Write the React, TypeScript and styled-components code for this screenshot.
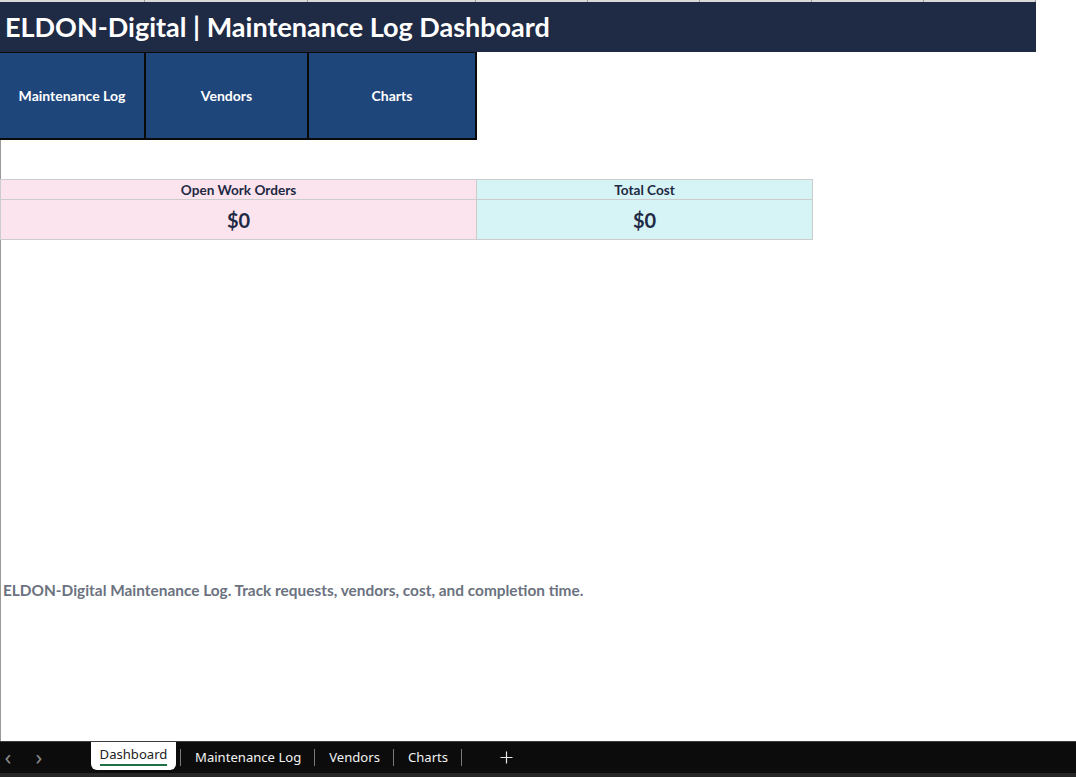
import styled, { createGlobalStyle } from "styled-components";

const GlobalStyle = createGlobalStyle`
  html, body {
    margin: 0;
    padding: 0;
    background: #ffffff;
  }
  #root {
    height: 777px;
  }
`;

const sheetFont = `Lato, "Open Sans", "Liberation Sans", sans-serif`;
const uiFont = `"Noto Sans", "Open Sans", "Liberation Sans", sans-serif`;

const columnWidths = [145, 163, 168, 112, 112, 112, 112, 112];
const navItems = [
  { label: "Maintenance Log", width: 146 },
  { label: "Vendors", width: 163 },
  { label: "Charts", width: 168 },
];
const sheetTabs = ["Maintenance Log", "Vendors", "Charts"];

export default function App() {
  return (
    <Page>
      <GlobalStyle />
      <Sheet>
        <ColumnRule>
          {columnWidths.map((w, i) => (
            <ColumnTick key={i} style={{ width: w }} />
          ))}
        </ColumnRule>
        <TitleBar>ELDON-Digital | Maintenance Log Dashboard</TitleBar>
        <NavRow>
          {navItems.map((item) => (
            <NavButton key={item.label} $width={item.width}>
              {item.label}
            </NavButton>
          ))}
        </NavRow>
        <Body>
          <KpiGrid>
            <KpiLabel $tone="#fce4ee">Open Work Orders</KpiLabel>
            <KpiLabel $tone="#d6f3f5">Total Cost</KpiLabel>
            <KpiValue $tone="#fce4ee">$0</KpiValue>
            <KpiValue $tone="#d6f3f5">$0</KpiValue>
          </KpiGrid>
          <Note>ELDON-Digital Maintenance Log. Track requests, vendors, cost, and completion time.</Note>
        </Body>
      </Sheet>
      <TabBar>
        <Arrows>
          <Arrow>‹</Arrow>
          <Arrow>›</Arrow>
        </Arrows>
        <ActiveTab>
          <ActiveLabel>Dashboard</ActiveLabel>
        </ActiveTab>
        <TabDivider />
        {sheetTabs.map((t) => (
          <SheetTab key={t}>
            <span>{t}</span>
            <TabDivider />
          </SheetTab>
        ))}
        <AddTab>
          <svg width="13" height="13" viewBox="0 0 13 13">
            <path d="M6.5 0.5v12M0.5 6.5h12" stroke="#e6e6e6" strokeWidth="1.2" fill="none" />
          </svg>
        </AddTab>
      </TabBar>
    </Page>
  );
}

const Page = styled.div`
  height: 777px;
  display: flex;
  flex-direction: column;
  overflow: hidden;
`;

const Sheet = styled.div`
  flex: 1;
  display: flex;
  flex-direction: column;
  min-height: 0;
`;

const ColumnRule = styled.div`
  display: flex;
  height: 2px;
  width: 1036px;
  background: #dadada;
`;

const ColumnTick = styled.div`
  box-sizing: border-box;
  height: 2px;
  border-right: 1px solid #9a9a9a;
`;

const TitleBar = styled.div`
  width: 1036px;
  height: 50px;
  box-sizing: border-box;
  background: #1f2a44;
  color: #ffffff;
  font-family: ${sheetFont};
  font-weight: 700;
  font-size: 27px;
  line-height: 50px;
  padding-left: 5px;
  white-space: nowrap;
`;

const NavRow = styled.div`
  display: flex;
`;

const NavButton = styled.div<{ $width: number }>`
  width: ${(p) => p.$width}px;
  height: 88px;
  box-sizing: border-box;
  background: #1f467a;
  border-right: 2px solid #0a0a0a;
  border-bottom: 2px solid #0a0a0a;
  border-top: 1px solid #0a0a0a;
  display: flex;
  align-items: center;
  justify-content: center;
  color: #ffffff;
  font-family: ${sheetFont};
  font-weight: 700;
  font-size: 14px;
`;

const Body = styled.div`
  flex: 1;
  border-left: 1px solid #9a9a9a;
  display: flex;
  flex-direction: column;
  padding-top: 39px;
`;

const KpiGrid = styled.div`
  display: grid;
  grid-template-columns: 476px 336px;
  grid-template-rows: 20px 40px;
  width: 812px;
  margin-left: -1px;
`;

const KpiCell = styled.div<{ $tone: string }>`
  background: ${(p) => p.$tone};
  border: 1px solid #cccccc;
  margin: 0 -1px -1px 0;
  display: flex;
  align-items: center;
  justify-content: center;
  color: #1f2a44;
  font-family: ${sheetFont};
  font-weight: 700;
`;

const KpiLabel = styled(KpiCell)`
  font-size: 13.6px;
`;

const KpiValue = styled(KpiCell)`
  font-size: 20px;
`;

const Note = styled.div`
  margin-top: 342px;
  padding-left: 2px;
  color: #6b7280;
  font-family: ${sheetFont};
  font-weight: 700;
  font-size: 15.4px;
`;

const TabBar = styled.div`
  height: 36px;
  box-sizing: border-box;
  background: #0c0c0c;
  border-top: 1px solid #3c3c3c;
  border-bottom: 4px solid #262626;
  display: flex;
  align-items: flex-start;
  font-family: ${uiFont};
  font-size: 13.1px;
`;

const Arrows = styled.div`
  width: 91px;
  display: flex;
  gap: 15px;
  height: 31px;
  align-items: center;
`;

const Arrow = styled.span`
  width: 16px;
  text-align: center;
  color: #8a8a8a;
  font-size: 22px;
  line-height: 20px;
  margin-top: -4px;
`;

const ActiveTab = styled.div`
  width: 85px;
  height: 28px;
  background: #ffffff;
  border-radius: 0 0 6px 6px;
  display: flex;
  justify-content: center;
  align-items: flex-start;
`;

const ActiveLabel = styled.span`
  color: #222222;
  margin-top: 3px;
  padding-bottom: 1px;
  border-bottom: 2px solid #1e7145;
  line-height: 18px;
`;

const TabDivider = styled.i`
  display: block;
  width: 1px;
  height: 17px;
  margin: 7px 0 0 4px;
  background: #7a7a7a;
`;

const SheetTab = styled.div`
  height: 30px;
  display: flex;
  align-items: center;
  gap: 13px;
  padding-left: 14px;
  color: #f2f2f2;

  ${TabDivider} {
    margin: 0;
    align-self: flex-start;
    margin-top: 7px;
  }
`;

const AddTab = styled.div`
  height: 30px;
  margin-left: 38px;
  display: flex;
  align-items: center;
`;
